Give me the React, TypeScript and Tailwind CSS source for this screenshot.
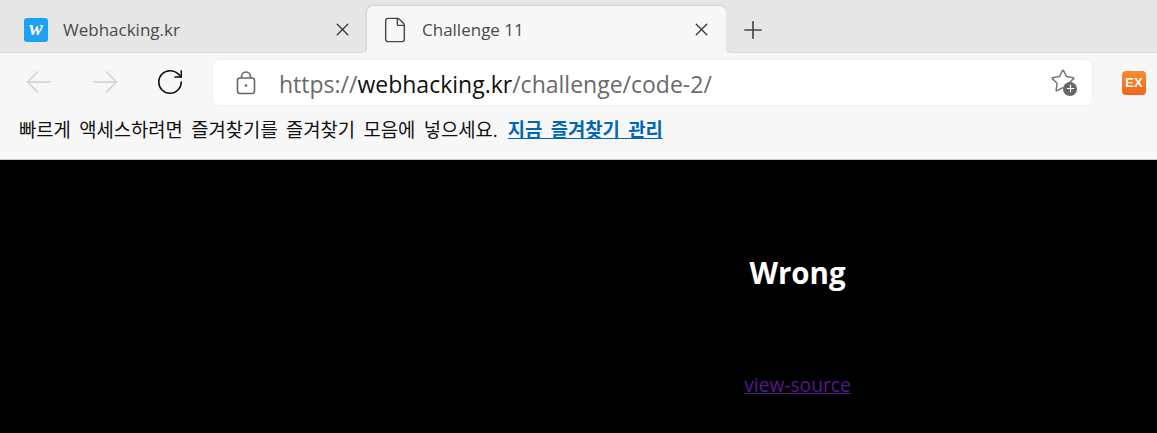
import { RotateCw, X, Plus, File, Star } from "lucide-react";

const ui = "font-['Open_Sans','Noto_Sans_CJK_KR',sans-serif]";

function BlueLogo() {
  return (
    <div className="w-6 h-6 rounded-[3px] bg-[#1da1f2] flex items-center justify-center">
      <span className="font-['Liberation_Serif',serif] italic font-bold text-white text-[20px] leading-none -mt-[3px]">w</span>
    </div>
  );
}

function Lock() {
  return (
    <svg width="20" height="24" viewBox="0 0 20 24" fill="none" stroke="#666" strokeWidth="1.6">
      <rect x="1.5" y="7" width="17" height="15.5" rx="2.5" />
      <path d="M5.5 7V5.5a4.5 4.5 0 0 1 9 0V7" />
      <circle cx="10" cy="14.5" r="1.3" fill="#666" stroke="none" />
    </svg>
  );
}

function NavArrow({ back }: { back?: boolean }) {
  return (
    <svg width="26" height="24" viewBox="0 0 26 24" fill="none" stroke="#d0d0d0" strokeWidth="1.4">
      <path d={back ? "M1.5 12H25M12 1.5 1.5 12 12 22.5" : "M24.5 12H1M14 1.5 24.5 12 14 22.5"} />
    </svg>
  );
}

function FavAdd() {
  return (
    <div className="relative w-[26px] h-[26px]">
      <Star size={26} strokeWidth={1.4} className="text-[#777] -ml-[1px] -mt-[2px]" />
      <div className="absolute right-0 bottom-0 w-[14px] h-[14px] rounded-full bg-[#666] flex items-center justify-center">
        <Plus size={11} strokeWidth={2.5} className="text-white" />
      </div>
    </div>
  );
}

export default function App() {
  return (
    <div className={`${ui} w-[1157px] h-[433px] bg-black overflow-hidden flex flex-col`}>
      <div className="h-[53px] bg-[#f7f7f7] flex items-stretch">
        <div className="w-[367px] bg-[#e6e6e6] rounded-br-[6px] shadow-[inset_0_-1px_0_#d6d6d6] flex items-center pt-[6px] pl-[24px] pr-[14px]">
          <BlueLogo />
          <span className="ml-[15px] text-[17px] text-[#4a4a4a] flex-1">Webhacking.kr</span>
          <X size={21} strokeWidth={1.5} className="text-[#333]" />
        </div>
        <div className="bg-[#e6e6e6]">
          <div className="w-[359px] h-[47px] mt-[6px] bg-[#f7f7f7] rounded-t-[6px] shadow-[0_0_3px_rgba(0,0,0,0.2)] flex items-center pl-[14px] pr-[14px]">
            <File size={28} strokeWidth={1.2} className="text-[#444]" />
            <span className="ml-[13px] text-[17px] text-[#4a4a4a] flex-1">Challenge 11</span>
            <X size={21} strokeWidth={1.5} className="text-[#333]" />
          </div>
        </div>
        <div className="flex-1 bg-[#e6e6e6] rounded-bl-[6px] shadow-[inset_0_-1px_0_#d6d6d6] flex items-center pt-[6px] pl-[13px]">
          <Plus size={28} strokeWidth={1.4} className="text-[#444]" />
        </div>
      </div>

      <div className="h-[60px] bg-[#f7f7f7] flex items-center pb-[1px]">
        <div className="w-[213px] flex items-center pl-[26px] pb-[2px]">
          <NavArrow back />
          <div className="ml-[40px]">
            <NavArrow />
          </div>
          <RotateCw size={30} strokeWidth={1.25} className="text-[#111] ml-[37px]" />
        </div>
        <div className="w-[879px] h-[45px] bg-white rounded-[6px] shadow-[0_0_2px_rgba(0,0,0,0.08)] flex items-center pl-[23px] pr-[15px]">
          <Lock />
          <div className="ml-[23px] flex-1 text-[23px] text-[#6a6a6a] pt-[3px]">
            https://<span className="text-[#111]">webhacking.kr</span>/challenge/code-2/
          </div>
          <FavAdd />
        </div>
        <div className="ml-[30px] w-6 h-6 rounded-[4px] bg-gradient-to-b from-[#f98a2c] to-[#f2651c] flex items-center justify-center">
          <span className="font-['Liberation_Sans',sans-serif] text-white text-[13px] font-bold leading-none">EX</span>
        </div>
      </div>

      <div className="h-[47px] bg-[#f7f7f7] border-b border-[#cccccc] flex items-center pl-[19px] pb-[11px] text-[18.8px] [word-spacing:3.5px]">
        <span className="text-[#111]">빠르게 액세스하려면 즐겨찾기를 즐겨찾기 모음에 넣으세요.</span>
        <a className="ml-[10px] text-[#0067b8] font-bold underline">지금 즐겨찾기 관리</a>
      </div>

      <div className="ml-[438px] flex flex-col items-center">
        <div className="mt-[93px] text-white text-[29.5px] font-bold leading-[40px]">Wrong</div>
        <a className="mt-[79px] text-[#551a8b] text-[19.2px] underline leading-[26px]">view-source</a>
      </div>
    </div>
  );
}
